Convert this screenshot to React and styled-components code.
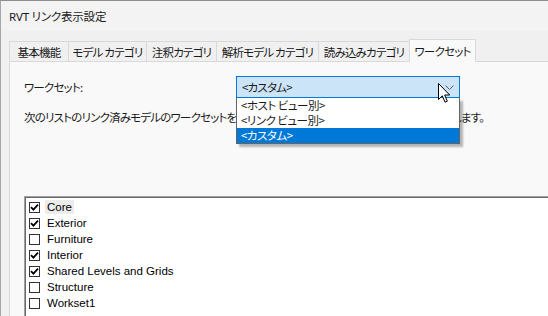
import React from 'react'
import styled, { createGlobalStyle } from 'styled-components'

const GlobalStyle = createGlobalStyle`
  html, body {
    margin: 0;
    padding: 0;
    width: 548px;
    height: 316px;
    overflow: hidden;
    background: #f0f0f0;
  }
  body {
    font-family: "Noto Sans", "Noto Sans CJK JP", sans-serif;
    color: #1a1a1a;
  }
`;

const tabs = [
  { label: '基本機能', width: 60 },
  { label: 'モデル カテゴリ', width: 79 },
  { label: '注釈カテゴリ', width: 71 },
  { label: '解析モデル カテゴリ', width: 103 },
  { label: '読み込みカテゴリ', width: 92 },
  { label: 'ワークセット', width: 67, active: true },
];

const options = ['<ホスト ビュー別>', '<リンク ビュー別>', '<カスタム>'];

const worksets = [
  { name: 'Core', checked: true, focused: true },
  { name: 'Exterior', checked: true },
  { name: 'Furniture', checked: false },
  { name: 'Interior', checked: true },
  { name: 'Shared Levels and Grids', checked: true },
  { name: 'Structure', checked: false },
  { name: 'Workset1', checked: false },
];

const Check = () => (
  <svg width="9" height="9" viewBox="0 0 9 9">
    <path d="M1 4.2 L3.4 6.6 L8 1.6" fill="none" stroke="#000" strokeWidth="1.8" />
  </svg>
);

const Cursor = () => (
  <svg width="13" height="21" viewBox="0 0 13 21">
    <path
      d="M0.5 0.5 L0.5 16.5 L4.3 12.8 L7 19.2 L9.3 18.2 L6.7 12 L11.7 12 Z"
      fill="#fff"
      stroke="#000"
      strokeWidth="1"
      strokeLinejoin="miter"
    />
  </svg>
);

const App = () => {
  return (
    <>
      <GlobalStyle />
      <Window>
        <TitleBar>RVT リンク表示設定</TitleBar>

        <TabStrip>
          {tabs.map((t) => (
            <Tab key={t.label} $width={t.width} $active={t.active}>
              {t.label}
            </Tab>
          ))}
        </TabStrip>

        <Panel>
          <FieldRow>
            <Label>ワークセット:</Label>
            <ComboWrap>
              <Combo>
                <span>&lt;カスタム&gt;</span>
                <svg width="9" height="5" viewBox="0 0 9 5">
                  <path d="M0.5 0.5 L4.5 4.5 L8.5 0.5" fill="none" stroke="#606060" strokeWidth="1" />
                </svg>
              </Combo>
              <DropList>
                {options.map((o, i) => (
                  <Option key={o} $selected={i === options.length - 1}>{o}</Option>
                ))}
              </DropList>
              <CursorSpot>
                <Cursor />
              </CursorSpot>
            </ComboWrap>
          </FieldRow>

          <Description>
            次のリストのリンク済みモデルのワークセットを選択すると、そのワークセット内の要素が表示されます。
          </Description>

          <ListBox>
            {worksets.map((w) => (
              <ListRow key={w.name}>
                <CheckBox>{w.checked && <Check />}</CheckBox>
                <ItemText $focused={w.focused}>{w.name}</ItemText>
              </ListRow>
            ))}
          </ListBox>
        </Panel>
      </Window>
    </>
  )
}

const Window = styled.div`
  width: 548px;
  height: 316px;
  box-sizing: border-box;
  border-top: 1px solid #8f8f8f;
  border-left: 1px solid #a6a6a6;
  background: #f0f0f0;
  display: flex;
  flex-direction: column;
  overflow: hidden;
`;

const TitleBar = styled.div`
  height: 30px;
  background: #f3f3f3;
  display: flex;
  align-items: center;
  padding-left: 8px;
  font-size: 11.5px;
  letter-spacing: -0.2px;
  color: #1a1a1a;
  font-feature-settings: "palt";
`;

const TabStrip = styled.div`
  display: flex;
  align-items: flex-end;
  padding: 8px 0 0 9px;
  height: 22px;
  position: relative;
  z-index: 1;
`;

const Tab = styled.div`
  width: ${(p) => p.$width}px;
  height: ${(p) => (p.$active ? 23 : 20)}px;
  box-sizing: border-box;
  margin-left: -1px;
  border: 1px solid #d9d9d9;
  border-bottom: none;
  background: ${(p) => (p.$active ? '#f9f9f9' : '#f0f0f0')};
  margin-bottom: ${(p) => (p.$active ? '-1px' : '0')};
  display: flex;
  align-items: center;
  justify-content: center;
  padding-top: ${(p) => (p.$active ? '0' : '1px')};
  font-family: "Noto Sans CJK JP", sans-serif;
  font-size: 11.5px;
  letter-spacing: -0.8px;
  font-feature-settings: "palt";
  color: #1a1a1a;
  white-space: nowrap;
`;

const Panel = styled.div`
  flex: 1;
  margin-left: 8px;
  background: #f9f9f9;
  border-top: 1px solid #d9d9d9;
  border-left: 1px solid #d9d9d9;
  padding: 14px 0 0 14px;
  display: flex;
  flex-direction: column;
  font-family: "Noto Sans CJK JP", sans-serif;
  font-size: 11.5px;
  letter-spacing: -0.8px;
  font-feature-settings: "palt";
  color: #1a1a1a;
  min-height: 0;
`;

const FieldRow = styled.div`
  display: flex;
  align-items: center;
  height: 22px;
`;

const Label = styled.div`
  width: 212px;
  flex-shrink: 0;
`;

const ComboWrap = styled.div`
  position: relative;
  width: 224px;
  height: 22px;
  z-index: 2;
`;

const Combo = styled.div`
  box-sizing: border-box;
  height: 22px;
  background: #cce4f7;
  border: 1px solid #0078d7;
  display: flex;
  align-items: center;
  justify-content: space-between;
  padding: 0 5px 0 5px;
`;

const DropList = styled.div`
  position: absolute;
  left: 0;
  top: 22px;
  width: 224px;
  box-sizing: border-box;
  background: #fff;
  border: 1px solid #646464;
  border-top: none;
  box-shadow: 3px 3px 2px rgba(0, 0, 0, 0.28);
  display: flex;
  flex-direction: column;
`;

const Option = styled.div`
  height: 15px;
  line-height: 15px;
  padding-left: 4px;
  letter-spacing: -0.5px;
  background: ${(p) => (p.$selected ? '#0078d7' : 'transparent')};
  color: ${(p) => (p.$selected ? '#fff' : '#1a1a1a')};
  white-space: nowrap;
`;

const CursorSpot = styled.div`
  position: absolute;
  left: 202px;
  top: 7px;
  line-height: 0;
`;

const Description = styled.div`
  margin-top: 12px;
  line-height: 15px;
  white-space: nowrap;
`;

const ListBox = styled.div`
  margin-top: 71px;
  flex: 1;
  margin-right: -20px;
  background: #fff;
  border-top: 1px solid #a0a0a0;
  border-left: 1px solid #a0a0a0;
  box-shadow: inset 1px 1px 0 #696969;
  padding: 2px 0 0 4px;
  display: flex;
  flex-direction: column;
  font-family: "Liberation Sans", sans-serif;
  font-size: 11.5px;
  letter-spacing: 0;
  color: #000;
`;

const ListRow = styled.div`
  height: 16px;
  display: flex;
  align-items: center;
`;

const CheckBox = styled.div`
  width: 11px;
  height: 11px;
  box-sizing: border-box;
  border: 1px solid #333;
  background: #fff;
  display: flex;
  align-items: center;
  justify-content: center;
  flex-shrink: 0;
`;

const ItemText = styled.span`
  margin-left: 5px;
  padding: 0 2px;
  line-height: 14px;
  background: ${(p) => (p.$focused ? '#ececec' : 'transparent')};
  white-space: nowrap;
`;

export default App
